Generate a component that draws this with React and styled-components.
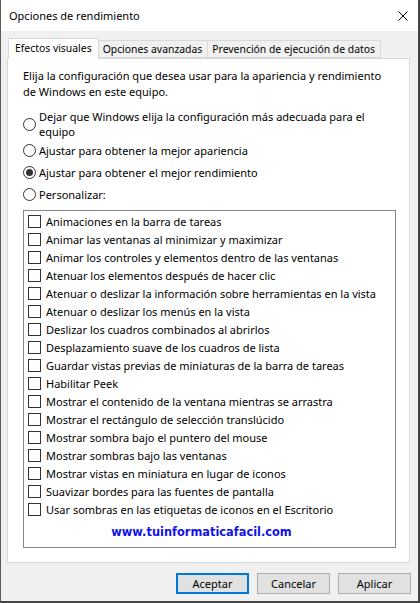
import React from 'react';
import styled, { createGlobalStyle } from 'styled-components';

const GlobalStyle = createGlobalStyle`
    html, body {
        margin: 0;
        padding: 0;
        background: #f0f0f0;
    }
    * {
        box-sizing: border-box;
    }
`;

const Window = styled.div`
    width: 420px;
    height: 603px;
    display: flex;
    flex-direction: column;
    background: #f0f0f0;
    border-left: 1px solid #5a5a5a;
    border-right: 2px solid #444444;
    border-bottom: 2px solid #444444;
    font-family: "Noto Sans", "Open Sans", sans-serif;
    font-size: 11px;
    color: #000;
`;

const TitleBar = styled.div`
    height: 31px;
    flex-shrink: 0;
    background: #ffffff;
    display: flex;
    align-items: center;
    justify-content: space-between;
    padding: 0 10px 0 8px;
    font-size: 11px;
`;

const CloseIcon = () => (
    <svg width="10" height="10" viewBox="0 0 10 10">
        <path d="M0.5 0.5 L9.5 9.5 M9.5 0.5 L0.5 9.5" stroke="#000" strokeWidth="1" fill="none" />
    </svg>
);

const Body = styled.div`
    flex: 1;
    display: flex;
    flex-direction: column;
    padding: 7px 8px 0 6px;
`;

const TabStrip = styled.div`
    height: 20px;
    display: flex;
    align-items: flex-end;
    padding-left: 1px;
    position: relative;
    z-index: 1;
`;

const Tab = styled.div`
    height: ${p => (p.$active ? '21px' : '18px')};
    margin-bottom: ${p => (p.$active ? '-1px' : '0')};
    margin-left: ${p => (p.$first ? '0' : '-1px')};
    padding: ${p => (p.$active ? '0 6px 2px 6px' : '0 5px 0 4px')};
    display: flex;
    align-items: center;
    background: ${p => (p.$active ? '#ffffff' : '#f0f0f0')};
    border: 1px solid #d9d9d9;
    border-bottom: ${p => (p.$active ? 'none' : '1px solid #d9d9d9')};
    font-size: 10.4px;
    white-space: nowrap;
    position: relative;
    z-index: ${p => (p.$active ? 2 : 1)};
`;

const Panel = styled.div`
    height: 505px;
    background: #ffffff;
    border: 1px solid #d9d9d9;
    padding: 9px 13px 0 15px;
    display: flex;
    flex-direction: column;
`;

const Intro = styled.p`
    margin: 0;
    line-height: 16px;
`;

const RadioGroup = styled.div`
    margin-top: 9px;
    display: flex;
    flex-direction: column;
`;

const RadioRow = styled.label`
    min-height: 22px;
    display: flex;
    align-items: center;
    gap: 3px;
    line-height: 15px;
`;

const RadioCircle = styled.span`
    width: 13px;
    height: 13px;
    flex-shrink: 0;
    border: 1px solid #333333;
    border-radius: 50%;
    background: #ffffff;
    display: flex;
    align-items: center;
    justify-content: center;

    &::after {
        content: '';
        width: 7px;
        height: 7px;
        border-radius: 50%;
        background: #333333;
        display: ${p => (p.$checked ? 'block' : 'none')};
    }
`;

const ListBox = styled.div`
    margin-top: 5px;
    height: 338px;
    border: 1px solid #828790;
    padding: 1px 0 0 4px;
    display: flex;
    flex-direction: column;
`;

const CheckRow = styled.div`
    height: 18px;
    display: flex;
    align-items: center;
    gap: 5px;
    white-space: nowrap;
`;

const CheckBox = styled.span`
    width: 13px;
    height: 13px;
    flex-shrink: 0;
    border: 1px solid #333333;
    background: #ffffff;
`;

const Watermark = styled.div`
    margin-top: 5px;
    height: 18px;
    display: flex;
    align-items: center;
    justify-content: center;
    padding-right: 20px;
    font-family: "DejaVu Sans", Verdana, sans-serif;
    font-weight: bold;
    font-size: 11.4px;
    color: #1212ec;
`;

const ButtonRow = styled.div`
    display: flex;
    justify-content: flex-end;
    gap: 8px;
    margin-top: 10px;
    margin-right: -1px;
`;

const Button = styled.button`
    width: 73px;
    height: 21px;
    padding: 0;
    background: #e1e1e1;
    border: ${p => (p.$default ? '2px solid #0078d7' : '1px solid #adadad')};
    font-family: "Noto Sans", "Open Sans", sans-serif;
    font-size: 11px;
    color: #000;
`;

const options = [
    { label: 'Dejar que Windows elija la configuración más adecuada para el equipo', checked: false },
    { label: 'Ajustar para obtener la mejor apariencia', checked: false },
    { label: 'Ajustar para obtener el mejor rendimiento', checked: true },
    { label: 'Personalizar:', checked: false },
];

const effects = [
    'Animaciones en la barra de tareas',
    'Animar las ventanas al minimizar y maximizar',
    'Animar los controles y elementos dentro de las ventanas',
    'Atenuar los elementos después de hacer clic',
    'Atenuar o deslizar la información sobre herramientas en la vista',
    'Atenuar o deslizar los menús en la vista',
    'Deslizar los cuadros combinados al abrirlos',
    'Desplazamiento suave de los cuadros de lista',
    'Guardar vistas previas de miniaturas de la barra de tareas',
    'Habilitar Peek',
    'Mostrar el contenido de la ventana mientras se arrastra',
    'Mostrar el rectángulo de selección translúcido',
    'Mostrar sombra bajo el puntero del mouse',
    'Mostrar sombras bajo las ventanas',
    'Mostrar vistas en miniatura en lugar de iconos',
    'Suavizar bordes para las fuentes de pantalla',
    'Usar sombras en las etiquetas de iconos en el Escritorio',
];

export default function App() {
    return (
        <>
            <GlobalStyle />
            <Window>
                <TitleBar>
                    <span>Opciones de rendimiento</span>
                    <CloseIcon />
                </TitleBar>
                <Body>
                    <TabStrip>
                        <Tab $active $first>Efectos visuales</Tab>
                        <Tab>Opciones avanzadas</Tab>
                        <Tab>Prevención de ejecución de datos</Tab>
                    </TabStrip>
                    <Panel>
                        <Intro>
                            Elija la configuración que desea usar para la apariencia y rendimiento de Windows en este equipo.
                        </Intro>
                        <RadioGroup>
                            {options.map(o => (
                                <RadioRow key={o.label}>
                                    <RadioCircle $checked={o.checked} />
                                    <span>{o.label}</span>
                                </RadioRow>
                            ))}
                        </RadioGroup>
                        <ListBox>
                            {effects.map(e => (
                                <CheckRow key={e}>
                                    <CheckBox />
                                    <span>{e}</span>
                                </CheckRow>
                            ))}
                            <Watermark>www.tuinformaticafacil.com</Watermark>
                        </ListBox>
                    </Panel>
                    <ButtonRow>
                        <Button $default>Aceptar</Button>
                        <Button>Cancelar</Button>
                        <Button>Aplicar</Button>
                    </ButtonRow>
                </Body>
            </Window>
        </>
    );
}
